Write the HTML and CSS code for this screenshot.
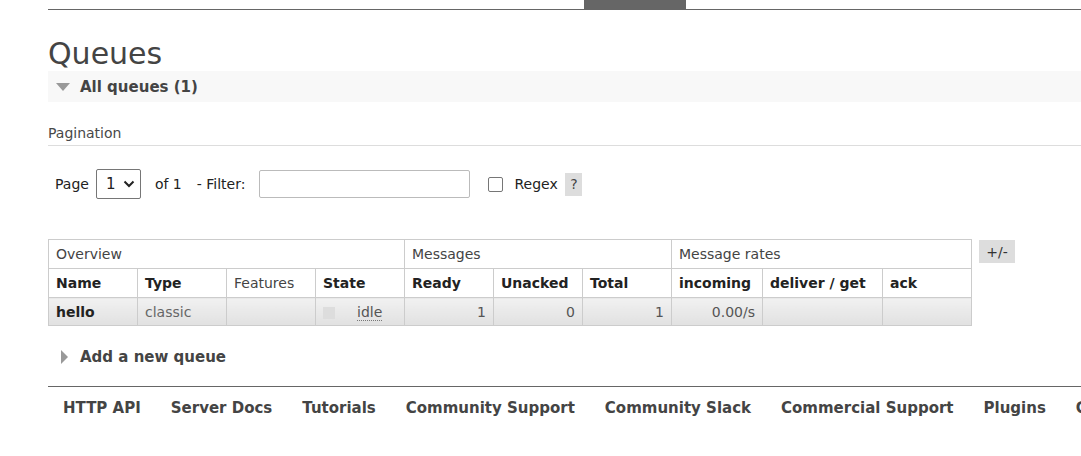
FILE: index.html
```html
<!DOCTYPE html>
<html>
<head>
<meta charset="utf-8">
<link rel="stylesheet" href="styles.css">
</head>
<body>
<div class="page">
  <div class="topbar"><div class="tab"></div></div>
  <h1 class="title">Queues</h1>
  <div class="section-head">
    <span class="tri-down"></span>
    <span class="section-title">All queues (1)</span>
  </div>
  <div class="pagination-head">Pagination</div>
  <div class="filter-row">
    <span class="lbl">Page</span>
    <span class="select">1 <svg class="chev" width="12" height="8" viewBox="0 0 12 8"><path d="M1.5 1.5 L6 6 L10.5 1.5" fill="none" stroke="#222" stroke-width="2"/></svg></span>
    <span class="lbl of">of 1</span>
    <span class="lbl">- Filter:</span>
    <span class="input"></span>
    <span class="checkbox"></span>
    <span class="lbl regex">Regex</span>
    <span class="help">?</span>
  </div>
  <div class="table-row">
    <table class="list">
      <tr class="group">
        <td colspan="4">Overview</td>
        <td colspan="3">Messages</td>
        <td colspan="3">Message rates</td>
      </tr>
      <tr class="heads">
        <th class="c1">Name</th>
        <th class="c2">Type</th>
        <th class="c3 plain">Features</th>
        <th class="c4">State</th>
        <th class="c5">Ready</th>
        <th class="c6">Unacked</th>
        <th class="c7">Total</th>
        <th class="c8">incoming</th>
        <th class="c9">deliver / get</th>
        <th class="c10">ack</th>
      </tr>
      <tr class="data">
        <td class="name">hello</td>
        <td class="muted">classic</td>
        <td></td>
        <td class="state"><span class="dot"></span><span class="idle">idle</span></td>
        <td class="num">1</td>
        <td class="num">0</td>
        <td class="num">1</td>
        <td class="num">0.00/s</td>
        <td></td>
        <td></td>
      </tr>
    </table>
    <span class="toggle">+/-</span>
  </div>
  <div class="add">
    <span class="tri-right"></span>
    <span class="add-title">Add a new queue</span>
  </div>
  <div class="footer">
    <span>HTTP API</span>
    <span>Server Docs</span>
    <span>Tutorials</span>
    <span>Community Support</span>
    <span>Community Slack</span>
    <span>Commercial Support</span>
    <span>Plugins</span>
    <span>GitHub</span>
  </div>
</div>
</body>
</html>
```
FILE: styles.css
```css
html, body {
  margin: 0;
  padding: 0;
  background: #fff;
  overflow: hidden;
}
body {
  font-family: "DejaVu Sans", Verdana, sans-serif;
  color: #444;
  font-size: 14px;
}
.page {
  padding-left: 48px;
  width: 1033px;
  white-space: nowrap;
}
.topbar {
  height: 9px;
  border-bottom: 1px solid #666;
  display: flex;
}
.tab {
  margin-left: 536px;
  width: 102px;
  height: 9px;
  background: #666;
}
.title {
  margin: 27px 0 0 0;
  font-size: 30px;
  font-weight: normal;
  line-height: 34px;
  color: #444;
}
.section-head {
  height: 31px;
  background: #f8f8f8;
  display: flex;
  align-items: center;
}
.tri-down {
  margin-left: 8px;
  width: 0;
  height: 0;
  border-left: 7px solid transparent;
  border-right: 7px solid transparent;
  border-top: 8px solid #999;
}
.section-title {
  margin-left: 10px;
  font-weight: bold;
  font-size: 15px;
  color: #444;
}
.pagination-head {
  margin-top: 22px;
  padding-bottom: 3px;
  border-bottom: 1px solid #ddd;
  font-size: 14px;
  line-height: 18px;
  color: #484848;
}
.filter-row {
  margin-top: 23px;
  display: flex;
  align-items: center;
  height: 30px;
  padding-left: 7px;
}
.lbl {
  font-size: 14px;
  color: #222;
}
.select {
  margin-left: 7px;
  width: 45px;
  height: 30px;
  box-sizing: border-box;
  border: 1px solid #767676;
  border-radius: 2px;
  display: flex;
  align-items: center;
  padding-left: 9px;
  gap: 8px;
  font-size: 15px;
  color: #222;
}
.of {
  margin-left: 14px;
  margin-right: 15px;
}
.input {
  margin-left: 14px;
  width: 211px;
  height: 28px;
  box-sizing: border-box;
  border: 1px solid #bbb;
  border-radius: 2px;
}
.checkbox {
  margin-left: 18px;
  width: 13px;
  height: 13px;
  border: 1px solid #767676;
  border-radius: 2px;
}
.regex {
  margin-left: 11px;
  width: 45px;
}
.help {
  margin-left: 6px;
  width: 17px;
  height: 23px;
  background: #ddd;
  display: flex;
  align-items: center;
  justify-content: center;
  font-size: 14px;
  color: #444;
}
.table-row {
  margin-top: 40px;
  display: flex;
  align-items: flex-start;
}
.list {
  border-collapse: collapse;
  font-size: 14px;
}
.list td, .list th {
  border: 1px solid #ccc;
  height: 29px;
  padding: 0 7px;
  text-align: left;
  box-sizing: border-box;
}
.list .data td {
  height: 28px;
}
.group td {
  color: #444;
  font-weight: normal;
}
.heads th {
  color: #222;
  font-weight: bold;
}
.heads th.plain {
  font-weight: normal;
  color: #444;
}
.c1, .c2, .c3, .c4, .c5, .c6, .c7 { width: 89px; }
.c8 { width: 91px; }
.c9 { width: 120px; }
.c10 { width: 89px; }
.data td {
  background: linear-gradient(#f1f1f1, #e1e1e1);
  color: #555;
}
.data td.name {
  font-weight: bold;
  color: #222;
}
.data td.muted {
  color: #666;
}
.data td.num {
  text-align: right;
  color: #555;
}
.dot {
  display: inline-block;
  width: 12px;
  height: 12px;
  background: #ddd;
  vertical-align: middle;
  margin-right: 22px;
}
.idle {
  color: #555;
  border-bottom: 1px dotted #777;
}
.toggle {
  margin-left: 7px;
  margin-top: 1px;
  width: 36px;
  height: 23px;
  background: #ddd;
  display: flex;
  align-items: center;
  justify-content: center;
  font-size: 14px;
  color: #333;
}
.add {
  margin-top: 22px;
  display: flex;
  align-items: center;
  height: 18px;
}
.tri-right {
  margin-left: 13px;
  width: 0;
  height: 0;
  border-top: 7px solid transparent;
  border-bottom: 7px solid transparent;
  border-left: 7px solid #999;
}
.add-title {
  margin-left: 12px;
  font-weight: bold;
  font-size: 15px;
  color: #444;
}
.footer {
  margin-top: 20px;
  border-top: 1px solid #666;
  padding-top: 12px;
  padding-left: 15px;
  display: flex;
  gap: 30px;
  font-weight: bold;
  font-size: 15px;
  color: #444;
}
```
